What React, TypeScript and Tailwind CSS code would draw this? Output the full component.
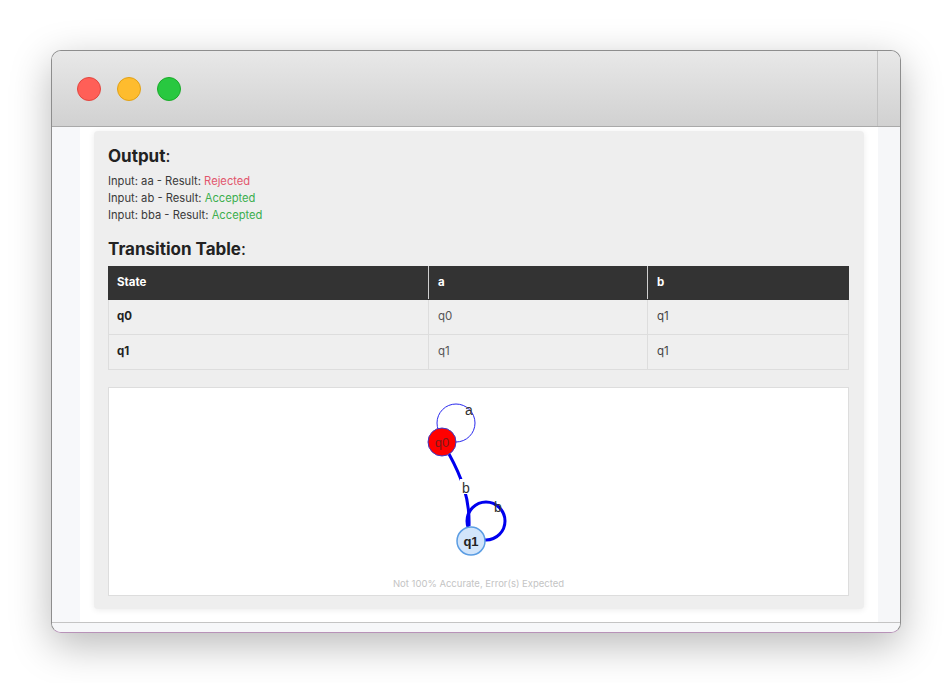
import React from "react";

function Graph() {
  return (
    <svg width="739" height="190" viewBox="0 2 739 190" className="block">
      {/* loop a on q0 */}
      <circle cx="347" cy="37" r="19" fill="none" stroke="#2a2aee" strokeWidth="1" />
      {/* loop b on q1 */}
      <circle cx="377" cy="135" r="19" fill="none" stroke="#0000ee" strokeWidth="3" />
      {/* edge q0 -> q1 */}
      <path d="M340 68 C 352 90, 361 112, 360 140" fill="none" stroke="#0000ee" strokeWidth="3" />
      {/* labels */}
      <text x="360" y="29" fontSize="14" fill="#333" textAnchor="middle" fontFamily="Arial, sans-serif">a</text>
      <rect x="351" y="93" width="12" height="15" fill="#fff" />
      <text x="357" y="107" fontSize="14" fill="#333" textAnchor="middle" fontFamily="Arial, sans-serif">b</text>
      <text x="389" y="126" fontSize="14" fill="#333" textAnchor="middle" fontFamily="Arial, sans-serif">b</text>
      {/* nodes */}
      <circle cx="333" cy="56" r="14" fill="#ff0000" stroke="#3a3acc" strokeWidth="1" />
      <text x="333" y="60.5" fontSize="13" fill="#7a1a1a" textAnchor="middle" fontFamily="Arial, sans-serif">q0</text>
      <circle cx="362" cy="155" r="14" fill="#d2e5fb" stroke="#5b9de3" strokeWidth="1.5" />
      <text x="362" y="159.5" fontSize="13" fill="#222" fontWeight="bold" textAnchor="middle" fontFamily="Arial, sans-serif">q1</text>
    </svg>
  );
}

export default function App() {
  const rows = [
    { s: "q0", a: "q0", b: "q1" },
    { s: "q1", a: "q1", b: "q1" },
  ];
  return (
    <div className="w-[951px] h-[683px] bg-white pt-[50px] pl-[51px] overflow-hidden" style={{ fontFamily: "Inter, 'Noto Sans', sans-serif" }}>
      <div className="w-[850px] h-[583px] rounded-[10px] border border-[#8d8d8d] border-b-[#b892b8] overflow-hidden flex flex-col shadow-[0_12px_40px_rgba(0,0,0,0.28)] bg-[#f6f7f9]">
        {/* title bar */}
        <div className="h-[76px] flex bg-gradient-to-b from-[#e8e8e8] to-[#d1d1d1] border-b border-[#a9a9a9] shrink-0">
          <div className="flex-1 flex items-center gap-[16px] pl-[25px] pt-[1px]">
            <div className="w-[24px] h-[24px] rounded-full bg-[#ff5f57] border border-[#e2463f]" />
            <div className="w-[24px] h-[24px] rounded-full bg-[#febc2e] border border-[#e1a116]" />
            <div className="w-[24px] h-[24px] rounded-full bg-[#28c840] border border-[#1aab29]" />
          </div>
          <div className="w-[23px] border-l border-[#c2c2c2]" />
        </div>
        {/* body */}
        <div className="flex flex-1 min-h-0">
          <div className="w-[28px] bg-[#f7f8fa]" />
          <div className="flex-1 bg-white pt-[4px] px-[14px] pb-[13px] flex">
            <div className="flex-1 bg-[#eeeeee] rounded-[4px] shadow-[0_1px_6px_rgba(0,0,0,0.08)] pl-[14px] pr-[15px] pt-[14px] pb-[14px] flex flex-col text-[#333]">
              <h2 className="text-[17px] leading-[22px] text-[#222]"><span className="font-bold">Output</span>:</h2>
              <div className="mt-[6px] text-[11.2px] leading-[17px] text-[#3a3a3a]">
                <div>Input: aa - Result: <span className="text-[#e2566d]">Rejected</span></div>
                <div>Input: ab - Result: <span className="text-[#3cae4e]">Accepted</span></div>
                <div>Input: bba - Result: <span className="text-[#3cae4e]">Accepted</span></div>
              </div>
              <h2 className="mt-[14px] text-[17px] leading-[22px] text-[#222]"><span className="font-bold">Transition Table</span>:</h2>
              <table className="mt-[6px] w-[741px] border-collapse text-[11.5px]">
                <thead>
                  <tr className="bg-[#333333] text-white h-[33px]">
                    <th className="w-[320px] text-left font-bold pl-[8px] border border-[#333] border-r-[#cfcfcf]">State</th>
                    <th className="w-[219px] text-left font-bold pl-[9px] border border-[#333] border-r-[#cfcfcf]">a</th>
                    <th className="text-left font-bold pl-[9px] border border-[#333]">b</th>
                  </tr>
                </thead>
                <tbody>
                  {rows.map((r) => (
                    <tr key={r.s} className="h-[35px] bg-[#efefef]">
                      <td className="pl-[8px] font-bold text-[#222] border border-[#dddddd]">{r.s}</td>
                      <td className="pl-[9px] text-[#555] border border-[#dddddd]">{r.a}</td>
                      <td className="pl-[9px] text-[#444] border border-[#dddddd]">{r.b}</td>
                    </tr>
                  ))}
                </tbody>
              </table>
              <div className="mt-[17px] w-[741px] bg-white border border-[#dddddd] flex flex-col items-center">
                <Graph />
                <div className="text-[9.5px] leading-[12px] text-[#c4c4c4] pb-[5px]">Not 100% Accurate, Error(s) Expected</div>
              </div>
            </div>
          </div>
          <div className="w-[22px] bg-[#f6f7f9]" />
        </div>
        <div className="h-[10px] border-t border-[#c4c4c4] bg-[#f6f7f9] shrink-0" />
      </div>
    </div>
  );
}
